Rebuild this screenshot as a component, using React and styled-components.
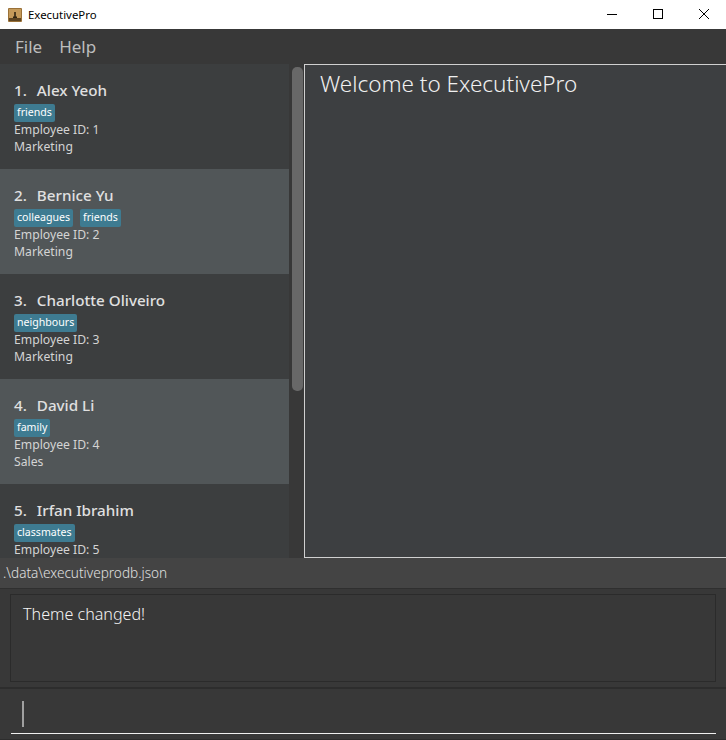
import React from 'react'
import styled, { createGlobalStyle } from 'styled-components'

const employees = [
  { name: 'Alex Yeoh', tags: ['friends'], dept: 'Marketing' },
  { name: 'Bernice Yu', tags: ['colleagues', 'friends'], dept: 'Marketing' },
  { name: 'Charlotte Oliveiro', tags: ['neighbours'], dept: 'Marketing' },
  { name: 'David Li', tags: ['family'], dept: 'Sales' },
  { name: 'Irfan Ibrahim', tags: ['classmates'], dept: 'Sales' },
]

function App() {
  return (
    <Window>
      <GlobalStyle />
      <TitleBar>
        <AppIcon viewBox="0 0 14 14">
          <rect width="14" height="14" rx="1" fill="#9a7138" />
          <rect x="1" y="1" width="12" height="12" fill="#c49a5a" />
          <rect x="1" y="10" width="12" height="3" fill="#5e4522" />
          <path d="M5 10h4V8.500H7.800V4H6.200v4.500H5z" fill="#2e2412" />
        </AppIcon>
        <AppTitle>ExecutivePro</AppTitle>
        <WindowButtons>
          <WindowButton>
            <svg width="10" height="10" viewBox="0 0 10 10"><path d="M0 5.500h10" stroke="#000" /></svg>
          </WindowButton>
          <WindowButton>
            <svg width="10" height="10" viewBox="0 0 10 10"><rect x="0.500" y="0.500" width="9" height="9" fill="none" stroke="#000" /></svg>
          </WindowButton>
          <WindowButton>
            <svg width="10" height="10" viewBox="0 0 10 10"><path d="M0 0l10 10M10 0L0 10" stroke="#000" /></svg>
          </WindowButton>
        </WindowButtons>
      </TitleBar>
      <MenuBar>
        <MenuItem>File</MenuItem>
        <MenuItem>Help</MenuItem>
      </MenuBar>
      <Main>
        <ListPane>
          <CardList>
            {employees.map((e, i) => (
              <Card key={e.name} $alt={i % 2 === 1}>
                <CardName>
                  <span>{i + 1}.</span>
                  <span>{e.name}</span>
                </CardName>
                <TagRow>
                  {e.tags.map((t) => (
                    <Tag key={t}>{t}</Tag>
                  ))}
                </TagRow>
                <CardLine>Employee ID: {i + 1}</CardLine>
                <CardLine>{e.dept}</CardLine>
              </Card>
            ))}
          </CardList>
          <ScrollTrack>
            <ScrollThumb />
          </ScrollTrack>
        </ListPane>
        <Viewer>Welcome to ExecutivePro</Viewer>
      </Main>
      <StatusBar>.\data\executiveprodb.json</StatusBar>
      <ResultPane>
        <ResultBox>Theme changed!</ResultBox>
      </ResultPane>
      <CommandPane>
        <CommandBox>
          <Caret />
        </CommandBox>
      </CommandPane>
    </Window>
  )
}

export default App

const font = `"Noto Sans", "Open Sans", sans-serif`

const GlobalStyle = createGlobalStyle`
  html, body {
    margin: 0;
    padding: 0;
    background: #383838;
  }
`

const Window = styled.div`
  width: 726px;
  height: 740px;
  display: flex;
  flex-direction: column;
  overflow: hidden;
  font-family: ${font};
  background: #383838;
`

const TitleBar = styled.div`
  height: 29px;
  flex: none;
  display: flex;
  align-items: center;
  padding-left: 8px;
  background: #fff;
`

const AppIcon = styled.svg`
  width: 14px;
  height: 14px;
`

const AppTitle = styled.div`
  margin-left: 6px;
  font-size: 11.400px;
  color: #000;
`

const WindowButtons = styled.div`
  margin-left: auto;
  margin-right: -1px;
  margin-bottom: 2px;
  display: flex;
`

const WindowButton = styled.div`
  width: 46px;
  height: 27px;
  display: flex;
  align-items: center;
  justify-content: center;
`

const MenuBar = styled.div`
  height: 35px;
  flex: none;
  display: flex;
  gap: 17px;
  align-items: center;
  padding-left: 15px;
  background: #383838;
`

const MenuItem = styled.div`
  font-size: 17px;
  color: #bdbdbd;
`

const Main = styled.div`
  height: 494px;
  flex: none;
  display: flex;
  background: #3d3f41;
`

const ListPane = styled.div`
  width: 304px;
  flex: none;
  display: flex;
  overflow: hidden;
`

const CardList = styled.div`
  width: 289px;
  flex: none;
`

const Card = styled.div`
  height: 105px;
  box-sizing: border-box;
  padding: 14px 0 0 14px;
  background: ${(p) => (p.$alt ? '#515658' : '#3c3e3f')};
`

const CardName = styled.div`
  display: flex;
  gap: 10px;
  height: 24px;
  line-height: 24px;
  font-size: 15.200px;
  font-weight: 500;
  color: #e0e0e0;
`

const TagRow = styled.div`
  display: flex;
  gap: 7px;
  margin-top: 2px;
  height: 17px;
`

const Tag = styled.div`
  height: 18px;
  line-height: 17px;
  padding: 0 3px;
  border-radius: 2px;
  font-size: 10.600px;
  color: #fff;
  background: #3e7b91;
`

const CardLine = styled.div`
  height: 17px;
  line-height: 17px;
  font-size: 12.200px;
  color: #d4d4d4;
`

const ScrollTrack = styled.div`
  flex: 1;
  padding: 3px 1px 0 3px;
  background: #383838;
`

const ScrollThumb = styled.div`
  height: 324px;
  border-radius: 5px;
  background: #686868;
`

const Viewer = styled.div`
  width: 430px;
  flex: none;
  box-sizing: border-box;
  padding: 3px 0 0 15px;
  border: 1px solid #d0d0d0;
  font-size: 22.500px;
  font-weight: 300;
  line-height: 32px;
  color: #f0f0f0;
  background: #3d3f41;
`

const StatusBar = styled.div`
  height: 31px;
  flex: none;
  box-sizing: border-box;
  padding-left: 3px;
  line-height: 30px;
  font-size: 13.600px;
  font-weight: 300;
  color: #e0e0e0;
  background: #444;
  border-bottom: 1px solid #2f2f2f;
`

const ResultPane = styled.div`
  height: 100px;
  flex: none;
  box-sizing: border-box;
  padding: 5px 10px 0 10px;
  border-bottom: 2px solid #2d2d2d;
  background: #383838;
`

const ResultBox = styled.div`
  height: 88px;
  box-sizing: border-box;
  padding: 6px 12px;
  border: 1px solid #2b2b2b;
  font-size: 16.100px;
  font-weight: 300;
  line-height: 26px;
  color: #f4f4f4;
  background: #383838;
`

const CommandPane = styled.div`
  flex: 1;
  box-sizing: border-box;
  padding: 0 10px 0 11px;
  background: #383838;
  border-bottom: 1px solid #2d2d2d;
`

const CommandBox = styled.div`
  height: 45px;
  box-sizing: border-box;
  padding: 12px 0 0 11px;
  border-bottom: 1px solid #f0f0f0;
`

const Caret = styled.div`
  width: 2px;
  height: 26px;
  background: #a0a0a0;
`
